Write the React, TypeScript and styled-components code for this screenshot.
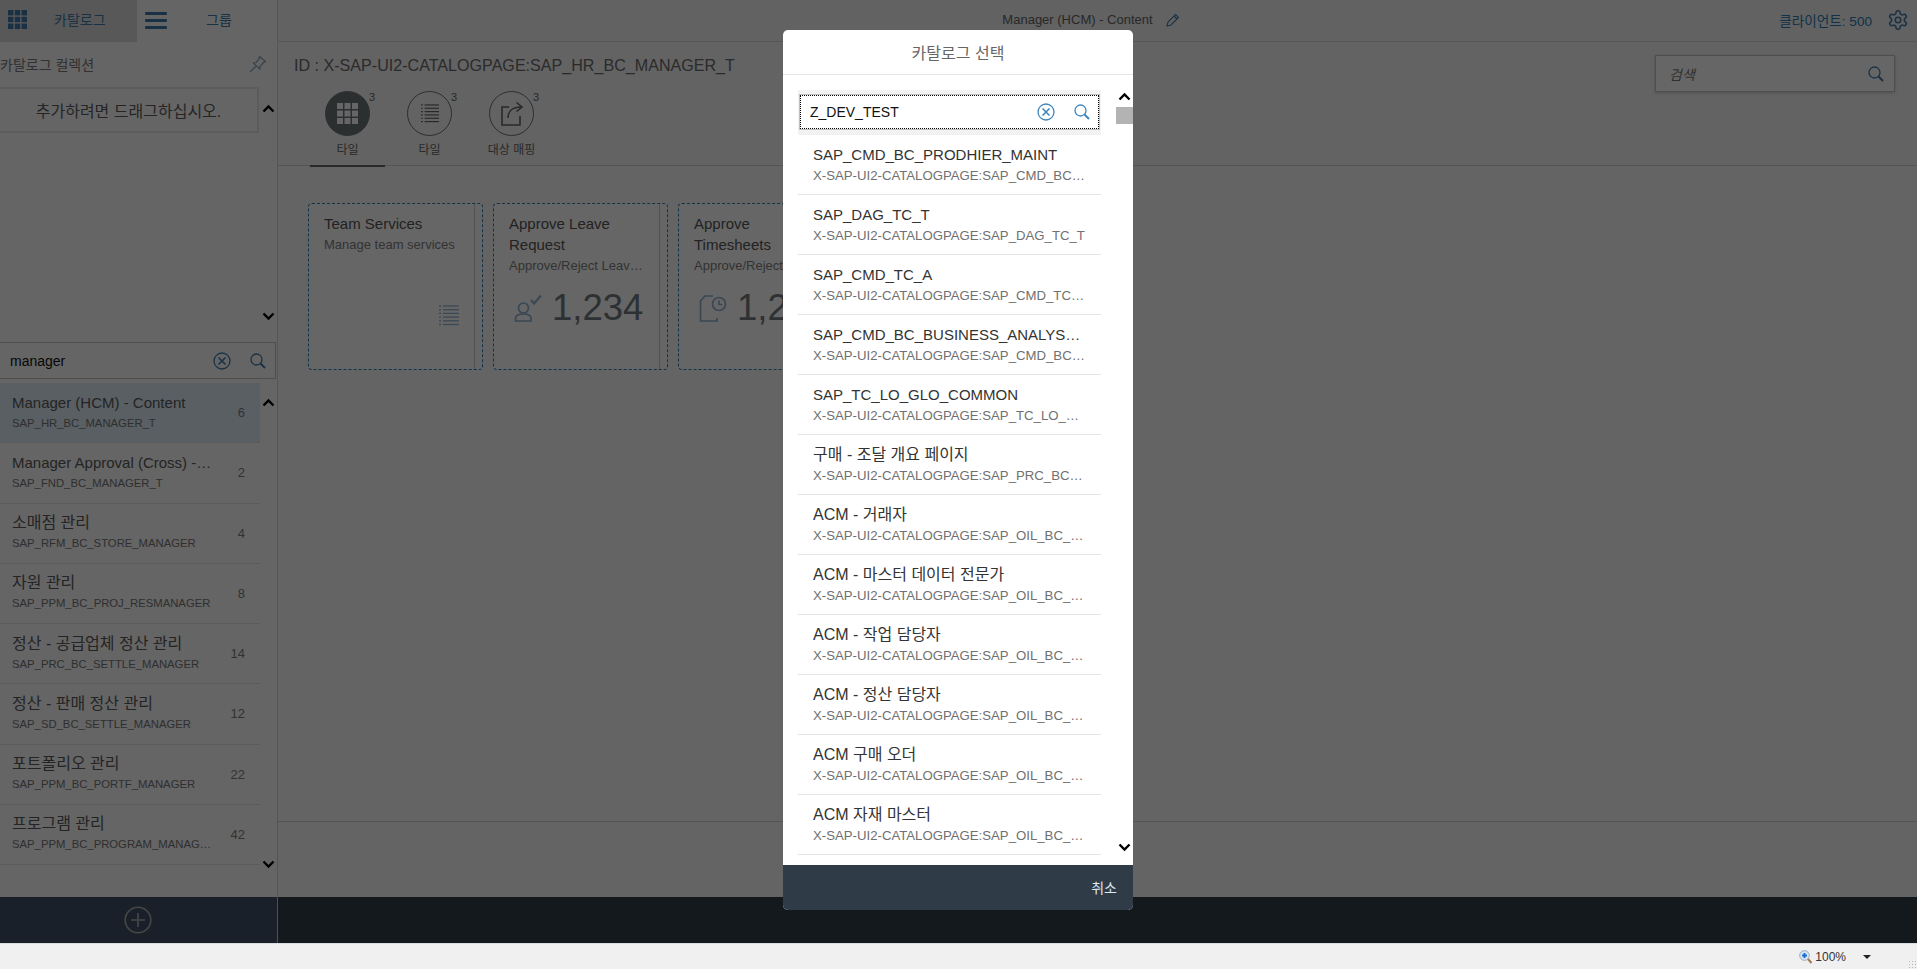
import React, { FunctionComponent } from 'react';
import styled, { createGlobalStyle } from 'styled-components';

const GlobalStyle = createGlobalStyle`
  html, body {
    margin: 0;
    padding: 0;
    overflow: hidden;
    font-family: "Liberation Sans", "Noto Sans CJK KR", sans-serif;
  }
  * {
    box-sizing: border-box;
  }
`;

const Page = styled.div`
  display: flex;
  flex-direction: column;
  height: 969px;
  width: 1917px;
`;

const Shell = styled.div`
  display: flex;
  flex-direction: column;
  height: 943px;
  position: relative;
`;

const Workspace = styled.div`
  display: flex;
  flex: 1;
  min-height: 0;
  background: #fbfbfb;
`;

const Panel = styled.aside`
  display: flex;
  flex-direction: column;
  width: 278px;
  border-right: 1px solid #d8d8d8;
  background: #fcfcfc;
`;

const PanelTabs = styled.div`
  display: flex;
  align-items: center;
  height: 42px;
  flex: none;
`;

const CatalogTab = styled.div`
  display: flex;
  align-items: center;
  width: 137px;
  height: 42px;
  padding: 0 0 4px 8px;
  background: #dcdcdc;
  color: #427cac;
  font-size: 14px;
`;

const CatalogTabLabel = styled.span`
  margin-left: 27px;
`;

const MenuButton = styled.div`
  display: flex;
  width: 38px;
  justify-content: center;
  margin-bottom: 2px;
`;

const GroupTab = styled.div`
  color: #427cac;
  font-size: 14px;
  margin: 0 0 4px 31px;
`;

const CollectionHeader = styled.div`
  display: flex;
  align-items: center;
  justify-content: space-between;
  height: 45px;
  padding: 0 10px 2px 0;
  font-size: 14px;
  color: #7a7a7a;
  flex: none;
`;

const DropZoneRow = styled.div`
  display: flex;
  height: 255px;
  flex: none;
`;

const DropZone = styled.div`
  width: 259px;
  height: 46px;
  border: 2px solid #e6e6e6;
  border-left: none;
  display: flex;
  align-items: center;
  justify-content: center;
  font-size: 16px;
  color: #5e5e5e;
`;

const ScrollRail = styled.div`
  display: flex;
  flex: 1;
  flex-direction: column;
  align-items: center;
  justify-content: space-between;
  padding: 17px 0 21px;
`;

const PanelSearch = styled.div`
  display: flex;
  align-items: center;
  flex: none;
  width: 276px;
  height: 37px;
  border: 1px solid #c4c4c4;
  border-left: none;
  background: #fdfdfd;
  padding: 0 9px 0 10px;
  font-size: 14px;
  color: #111;
`;

const SearchValue = styled.span`
  flex: 1;
  font-weight: 400;
`;

const SearchIcons = styled.div`
  display: flex;
  align-items: center;
  gap: 19px;
`;

const PanelListRow = styled.div`
  display: flex;
  flex: 1;
  min-height: 0;
  margin-top: 4px;
`;

const PanelList = styled.div`
  width: 260px;
  flex: none;
`;

const PanelRail = styled(ScrollRail)`
  padding: 15px 0 28px;
`;

const PanelItem = styled.div<{ $selected?: boolean }>`
  display: flex;
  align-items: center;
  height: 60.25px;
  padding: 0 15px 0 12px;
  border-bottom: 1px solid #e4e4e4;
  background: ${p => (p.$selected ? '#dfedf7' : 'transparent')};
`;

const PanelItemText = styled.div`
  flex: 1;
  min-width: 0;
`;

const PanelItemTitle = styled.div<{ $hangul?: boolean }>`
  font-size: ${p => (p.$hangul ? '16px' : '15px')};
  line-height: 20px;
  color: #5a5a5a;
  white-space: nowrap;
  overflow: hidden;
  text-overflow: ellipsis;
`;

const PanelItemCode = styled.div`
  font-size: 11.3px;
  line-height: 20px;
  color: #777;
  white-space: nowrap;
  overflow: hidden;
  text-overflow: ellipsis;
`;

const PanelItemCount = styled.div`
  width: 32px;
  flex: none;
  text-align: right;
  font-size: 13px;
  color: #7e7e7e;
`;

const Main = styled.main`
  display: flex;
  flex: 1;
  flex-direction: column;
  min-width: 0;
`;

const MainHeader = styled.header`
  display: grid;
  grid-template-columns: 1fr auto 1fr;
  align-items: center;
  height: 42px;
  flex: none;
  padding: 0 8px 2px 0;
  border-bottom: 1px solid #d8d8d8;
  background: #f4f4f4;
`;

const HeaderTitle = styled.div`
  display: flex;
  align-items: center;
  gap: 13px;
  font-size: 13px;
  color: #666;
  margin-right: 5px;
`;

const HeaderRight = styled.div`
  display: flex;
  align-items: center;
  justify-content: flex-end;
  gap: 15px;
  font-size: 13.6px;
  color: #2a7fb8;
`;

const ObjectHeader = styled.div`
  display: flex;
  flex-direction: column;
  height: 124px;
  flex: none;
  padding: 11px 0 0 16px;
  border-bottom: 1px solid #c9d4de;
  position: relative;
  background: #f7f7f7;
`;

const ObjectTitle = styled.h1`
  margin: 0;
  font-size: 16.1px;
  line-height: 24px;
  font-weight: 400;
  color: #6c6c6c;
`;

const TabBar = styled.div`
  display: flex;
  margin: 14px 0 0 16px;
`;

const IconTab = styled.div<{ $active?: boolean }>`
  width: 75px;
  height: 76px;
  margin-right: 7px;
  display: flex;
  flex-direction: column;
  align-items: center;
  position: relative;
  border-bottom: 2px solid ${p => (p.$active ? '#666' : 'transparent')};
`;

const IconCircle = styled.div<{ $active?: boolean }>`
  width: 45px;
  height: 45px;
  border-radius: 50%;
  display: flex;
  align-items: center;
  justify-content: center;
  border: 1px solid #6f7578;
  background: ${p => (p.$active ? '#6f7578' : 'transparent')};
`;

const TabBadge = styled.span`
  position: absolute;
  top: 0;
  left: 59px;
  font-size: 11px;
  line-height: 12px;
  color: #666;
`;

const TabLabel = styled.span`
  margin-top: 6px;
  font-size: 12px;
  line-height: 16px;
  color: #666;
`;

const ObjectSearch = styled.div`
  position: absolute;
  top: 13px;
  right: 22px;
  width: 240px;
  height: 37px;
  display: flex;
  align-items: center;
  justify-content: space-between;
  padding: 0 10px 0 13px;
  background: #fff;
  border: 1px solid #c4c4c4;
  box-shadow: 0 1px 3px rgba(0, 0, 0, 0.2);
  font-size: 14px;
  font-style: italic;
  color: #777;
`;

const TileArea = styled.section`
  display: flex;
  flex: 1;
  gap: 10px;
  padding: 37px 0 0 30px;
  overflow: hidden;
  border-bottom: 1px solid #c9d4de;
`;

const Tile = styled.article`
  display: flex;
  flex: none;
  width: 175px;
  height: 167px;
  background: #fff;
  border: 1px dashed #2a7fb8;
  border-radius: 4px;
`;

const TileBody = styled.div`
  display: flex;
  flex: 1;
  flex-direction: column;
  min-width: 0;
  padding: 9px 8px 0 15px;
  border-right: 1px solid #ccc;
`;

const TileStrip = styled.div`
  width: 7px;
  flex: none;
`;

const TileTitle = styled.div`
  padding-right: 12px;
  font-size: 15px;
  line-height: 21px;
  color: #555;
`;

const TileSub = styled.div`
  padding-right: 6px;
  font-size: 13px;
  line-height: 21px;
  color: #808080;
  white-space: nowrap;
  overflow: hidden;
  text-overflow: ellipsis;
`;

const TileKpi = styled.div`
  display: flex;
  align-items: center;
  gap: 10px;
  margin-top: 9px;
  padding-left: 5px;
`;

const TileNumber = styled.span`
  font-size: 36.5px;
  line-height: 46px;
  color: #737b80;
`;

const TileFoot = styled.div`
  display: flex;
  justify-content: flex-end;
  margin-top: auto;
  padding: 0 7px 43px 0;
`;

const LowerArea = styled.div`
  height: 75px;
  flex: none;
`;

const Footer = styled.footer`
  display: flex;
  height: 46px;
  flex: none;
  background: #323f49;
`;

const FooterLeft = styled.div`
  display: flex;
  align-items: center;
  justify-content: center;
  width: 278px;
  height: 46px;
  padding-right: 2px;
  background: #415266;
  border-right: 1px solid #c8c8c8;
`;

const StatusBar = styled.div`
  display: flex;
  align-items: center;
  justify-content: flex-end;
  height: 26px;
  padding-right: 46px;
  background: #f0f0f0;
  border-top: 1px solid #d9dde0;
  font-size: 12px;
  color: #333;
  position: relative;
`;

const StatusZoom = styled.span`
  margin: 0 17px 0 3px;
`;

const ResizeGrip = styled.div`
  position: absolute;
  right: 1px;
  bottom: 1px;
  width: 8px;
  height: 8px;
  background-image: radial-gradient(#b5b5b5 1px, transparent 1px);
  background-size: 3px 3px;
`;

const Scrim = styled.div`
  position: absolute;
  inset: 0;
  background: rgba(0, 0, 0, 0.6);
  display: flex;
  justify-content: center;
  align-items: flex-start;
  padding: 30px 1px 0 0;
`;

const Dialog = styled.div`
  width: 350px;
  height: 880px;
  display: flex;
  flex-direction: column;
  background: #fff;
  border-radius: 5px;
  overflow: hidden;
`;

const DialogHeader = styled.div`
  display: flex;
  align-items: center;
  justify-content: center;
  height: 45px;
  flex: none;
  border-bottom: 1px solid #e5e5e5;
  font-size: 16px;
  color: #666;
`;

const DialogBody = styled.div`
  display: flex;
  flex: 1;
  min-height: 0;
  padding: 15px 0 0 15px;
`;

const DialogList = styled.div`
  width: 303px;
  flex: none;
`;

const DialogRail = styled.div`
  display: flex;
  flex: 1;
  flex-direction: column;
  align-items: flex-end;
  padding-bottom: 10px;
  margin-top: -1px;
`;

const RailArrowBox = styled.div`
  width: 17px;
  display: flex;
  justify-content: center;
  height: 15px;
  align-items: center;
`;

const RailThumb = styled.div`
  width: 17px;
  height: 17px;
  margin-top: 3px;
  background: #b3b3b3;
`;

const RailSpacer = styled.div`
  flex: 1;
`;

const DialogSearchWrap = styled.div`
  height: 45px;
  padding: 4px 1px 5px;
  background: #f2f2f2;
`;

const DialogSearch = styled.div`
  display: flex;
  align-items: center;
  height: 36px;
  padding: 0 9px 0 10px;
  background: #fff;
  border: 1px solid #bfbfbf;
  outline: 1px dotted #000;
  outline-offset: -2px;
  font-size: 14px;
  color: #111;
`;

const DialogItem = styled.div`
  height: 60px;
  padding: 9px 15px 0 15px;
  border-bottom: 1px solid #e5e5e5;
`;

const DialogItemTitle = styled.div<{ $hangul?: boolean }>`
  font-size: ${p => (p.$hangul ? '16px' : '15px')};
  line-height: 21px;
  margin-bottom: 1px;
  color: #333;
  white-space: nowrap;
  overflow: hidden;
  text-overflow: ellipsis;
`;

const DialogItemCode = styled.div`
  font-size: 13.2px;
  line-height: 20px;
  color: #707070;
  white-space: nowrap;
  overflow: hidden;
  text-overflow: ellipsis;
`;

const DialogFooter = styled.div`
  display: flex;
  align-items: center;
  justify-content: flex-end;
  height: 45px;
  flex: none;
  padding: 0 16px 2px 0;
  background: #2f3c48;
  font-size: 14px;
  color: #dbe6ef;
`;

const Chevron: FunctionComponent<{ up?: boolean }> = ({ up }) => (
  <svg width="13" height="9" viewBox="0 0 13 9">
    <path d={up ? 'M1.5 7.5L6.5 2.5L11.5 7.5' : 'M1.5 1.5L6.5 6.5L11.5 1.5'} fill="none" stroke="#000" strokeWidth="2.4" />
  </svg>
);

const GridIcon: FunctionComponent<{ size: number; color: string }> = ({ size, color }) => (
  <svg width={size} height={size} viewBox="0 0 21 21" fill={color}>
    {[0, 7.5, 15].map(y => [0, 7.5, 15].map(x => <rect key={`${x}-${y}`} x={x} y={y} width="6" height="6" />))}
  </svg>
);

const ListIcon: FunctionComponent<{ color: string; width?: number; height?: number }> = ({ color, width = 20, height = 21 }) => (
  <svg width={width} height={height} viewBox="0 0 20 21" stroke={color} strokeWidth="1.3" fill="none">
    {[1, 4.7, 8.4, 12.1, 15.8, 19.5].map(y => (
      <React.Fragment key={y}>
        <path d={`M0 ${y}H2`} />
        <path d={`M4 ${y}H20`} />
      </React.Fragment>
    ))}
  </svg>
);

const ShareIcon = () => (
  <svg width="26" height="26" viewBox="0 0 26 26" fill="none" stroke="#666" strokeWidth="1.6">
    <path d="M10 6H3V24H21V15" />
    <path d="M9 17C9 10 14 6 22 6" />
    <path d="M17.5 1.5L23 6L17.5 10.5" />
  </svg>
);

const ClearIcon: FunctionComponent<{ color: string }> = ({ color }) => (
  <svg width="18" height="18" viewBox="0 0 18 18" fill="none" stroke={color} strokeWidth="1.3">
    <circle cx="9" cy="9" r="8" />
    <path d="M5.5 5.5L12.5 12.5M12.5 5.5L5.5 12.5" strokeWidth="1.6" />
  </svg>
);

const SearchIcon: FunctionComponent<{ color: string }> = ({ color }) => (
  <svg width="16" height="16" viewBox="0 0 16 16" fill="none" stroke={color} strokeWidth="1.3">
    <circle cx="6.5" cy="6.5" r="5.5" />
    <path d="M10.5 10.5L15 15" strokeWidth="2" />
  </svg>
);

const PinIcon = () => (
  <svg width="18" height="18" viewBox="0 0 18 18" fill="none" stroke="#8aa4bb" strokeWidth="1.2">
    <path d="M10.5 1.5L16.5 6.5L14.5 7.5L11 11.5L10.8 14L4.5 8L7 7.5L10 4Z" />
    <path d="M7 11L1 17" />
  </svg>
);

const MenuIcon = () => (
  <svg width="22" height="17" viewBox="0 0 22 17" fill="#427cac">
    <rect width="22" height="3" rx="1" />
    <rect y="7" width="22" height="3" rx="1" />
    <rect y="14" width="22" height="3" rx="1" />
  </svg>
);

const PencilIcon = () => (
  <svg width="14" height="14" viewBox="0 0 14 14" fill="none" stroke="#427cac" strokeWidth="1.1">
    <path d="M1 13L2 9L9.5 1.5L12.5 4.5L5 12Z" />
    <path d="M8 3L11 6" />
  </svg>
);

const GearIcon = () => (
  <svg width="22" height="22" viewBox="0 0 24 24" fill="none" stroke="#427cac" strokeWidth="1.7">
    <path d="M12.22 2h-.44a2 2 0 0 0-2 2v.18a2 2 0 0 1-1 1.73l-.43.25a2 2 0 0 1-2 0l-.15-.08a2 2 0 0 0-2.73.73l-.22.38a2 2 0 0 0 .73 2.73l.15.1a2 2 0 0 1 1 1.72v.51a2 2 0 0 1-1 1.74l-.15.09a2 2 0 0 0-.73 2.73l.22.38a2 2 0 0 0 2.73.73l.15-.08a2 2 0 0 1 2 0l.43.25a2 2 0 0 1 1 1.73V20a2 2 0 0 0 2 2h.44a2 2 0 0 0 2-2v-.18a2 2 0 0 1 1-1.73l.43-.25a2 2 0 0 1 2 0l.15.08a2 2 0 0 0 2.73-.73l.22-.39a2 2 0 0 0-.73-2.73l-.15-.08a2 2 0 0 1-1-1.74v-.5a2 2 0 0 1 1-1.74l.15-.09a2 2 0 0 0 .73-2.73l-.22-.38a2 2 0 0 0-2.73-.73l-.15.08a2 2 0 0 1-2 0l-.43-.25a2 2 0 0 1-1-1.73V4a2 2 0 0 0-2-2z" />
    <circle cx="12" cy="12" r="3" />
  </svg>
);

const ApproveIcon = () => (
  <svg width="28" height="28" viewBox="0 0 28 28" fill="none" stroke="#8fb3d1" strokeWidth="1.7">
    <circle cx="9.5" cy="14" r="5" />
    <path d="M1.5 27V24.5C1.5 21.5 4 20 9.5 20C15 20 17 21.5 17 24.5V27Z" />
    <path d="M17 6L20 9.5L27 1.5" strokeWidth="2.2" />
  </svg>
);

const TimesheetIcon = () => (
  <svg width="28" height="28" viewBox="0 0 28 28" fill="none" stroke="#8fb3d1" strokeWidth="1.7">
    <path d="M14 2H6L1.5 7V27H18V24" />
    <circle cx="20" cy="10" r="6.5" />
    <path d="M20 6.5V10.5H23.5" />
  </svg>
);

const PlusIcon = () => (
  <svg width="28" height="28" viewBox="0 0 28 28" fill="none" stroke="#b0b0b0" strokeWidth="1.6">
    <circle cx="14" cy="14" r="12.8" />
    <path d="M7 14H21M14 7V21" />
  </svg>
);

const ZoomIcon = () => (
  <svg width="13" height="14" viewBox="0 0 13 14">
    <circle cx="5.5" cy="5.5" r="4.8" fill="#d8e6f5" stroke="#9aa7b5" />
    <path d="M3 5.5H8M5.5 3V8" stroke="#1c6fd0" strokeWidth="2" />
    <path d="M9 9L12.5 13" stroke="#a07a50" strokeWidth="2" />
  </svg>
);

const CollectionList = [
  { title: 'Manager (HCM) - Content', code: 'SAP_HR_BC_MANAGER_T', count: 6 },
  { title: 'Manager Approval (Cross) - Content', code: 'SAP_FND_BC_MANAGER_T', count: 2 },
  { title: '소매점 관리', code: 'SAP_RFM_BC_STORE_MANAGER', count: 4 },
  { title: '자원 관리', code: 'SAP_PPM_BC_PROJ_RESMANAGER', count: 8 },
  { title: '정산 - 공급업체 정산 관리', code: 'SAP_PRC_BC_SETTLE_MANAGER', count: 14 },
  { title: '정산 - 판매 정산 관리', code: 'SAP_SD_BC_SETTLE_MANAGER', count: 12 },
  { title: '포트폴리오 관리', code: 'SAP_PPM_BC_PORTF_MANAGER', count: 22 },
  { title: '프로그램 관리', code: 'SAP_PPM_BC_PROGRAM_MANAGER', count: 42 },
];

const prefix = 'X-SAP-UI2-CATALOGPAGE:';

const CatalogList = [
  { title: 'SAP_CMD_BC_PRODHIER_MAINT', code: 'SAP_CMD_BC_PRODHIER_MAINT' },
  { title: 'SAP_DAG_TC_T', code: 'SAP_DAG_TC_T' },
  { title: 'SAP_CMD_TC_A', code: 'SAP_CMD_TC_A_MASTER_DATA' },
  { title: 'SAP_CMD_BC_BUSINESS_ANALYST_MAINT', code: 'SAP_CMD_BC_BUSINESS_ANALYST' },
  { title: 'SAP_TC_LO_GLO_COMMON', code: 'SAP_TC_LO_GLO_COMMON' },
  { title: '구매 - 조달 개요 페이지', code: 'SAP_PRC_BC_PURCHASER_OVP' },
  { title: 'ACM - 거래자', code: 'SAP_OIL_BC_ACM_TRADER' },
  { title: 'ACM - 마스터 데이터 전문가', code: 'SAP_OIL_BC_ACM_MASTER' },
  { title: 'ACM - 작업 담당자', code: 'SAP_OIL_BC_ACM_OPERATOR' },
  { title: 'ACM - 정산 담당자', code: 'SAP_OIL_BC_ACM_SETTLE' },
  { title: 'ACM 구매 오더', code: 'SAP_OIL_BC_ACM_PURCHASE' },
  { title: 'ACM 자재 마스터', code: 'SAP_OIL_BC_ACM_MATERIAL' },
];

const hasHangul = (text: string) => /[가-힣]/.test(text);

const App: FunctionComponent = () => (
  <Page>
    <GlobalStyle />
    <Shell>
      <Workspace>
        <Panel>
          <PanelTabs>
            <CatalogTab>
              <GridIcon size={19} color="#427cac" />
              <CatalogTabLabel>카탈로그</CatalogTabLabel>
            </CatalogTab>
            <MenuButton><MenuIcon /></MenuButton>
            <GroupTab>그룹</GroupTab>
          </PanelTabs>
          <CollectionHeader>
            <span>카탈로그 컬렉션</span>
            <PinIcon />
          </CollectionHeader>
          <DropZoneRow>
            <DropZone>추가하려면 드래그하십시오.</DropZone>
            <ScrollRail>
              <Chevron up />
              <Chevron />
            </ScrollRail>
          </DropZoneRow>
          <PanelSearch>
            <SearchValue>manager</SearchValue>
            <SearchIcons>
              <ClearIcon color="#427cac" />
              <SearchIcon color="#427cac" />
            </SearchIcons>
          </PanelSearch>
          <PanelListRow>
            <PanelList>
              {CollectionList.map((item, index) => (
                <PanelItem key={item.code} $selected={index === 0}>
                  <PanelItemText>
                    <PanelItemTitle $hangul={hasHangul(item.title)}>{item.title}</PanelItemTitle>
                    <PanelItemCode>{item.code}</PanelItemCode>
                  </PanelItemText>
                  <PanelItemCount>{item.count}</PanelItemCount>
                </PanelItem>
              ))}
            </PanelList>
            <PanelRail>
              <Chevron up />
              <Chevron />
            </PanelRail>
          </PanelListRow>
        </Panel>
        <Main>
          <MainHeader>
            <span />
            <HeaderTitle>
              Manager (HCM) - Content
              <PencilIcon />
            </HeaderTitle>
            <HeaderRight>
              클라이언트: 500
              <GearIcon />
            </HeaderRight>
          </MainHeader>
          <ObjectHeader>
            <ObjectTitle>ID : X-SAP-UI2-CATALOGPAGE:SAP_HR_BC_MANAGER_T</ObjectTitle>
            <TabBar>
              <IconTab $active>
                <IconCircle $active><GridIcon size={21} color="#fff" /></IconCircle>
                <TabBadge>3</TabBadge>
                <TabLabel>타일</TabLabel>
              </IconTab>
              <IconTab>
                <IconCircle><ListIcon color="#666" width={18} height={19} /></IconCircle>
                <TabBadge>3</TabBadge>
                <TabLabel>타일</TabLabel>
              </IconTab>
              <IconTab>
                <IconCircle><ShareIcon /></IconCircle>
                <TabBadge>3</TabBadge>
                <TabLabel>대상 매핑</TabLabel>
              </IconTab>
            </TabBar>
            <ObjectSearch>
              검색
              <SearchIcon color="#427cac" />
            </ObjectSearch>
          </ObjectHeader>
          <TileArea>
            <Tile>
              <TileBody>
                <TileTitle>Team Services</TileTitle>
                <TileSub>Manage team services</TileSub>
                <TileFoot><ListIcon color="#8fb3d1" /></TileFoot>
              </TileBody>
              <TileStrip />
            </Tile>
            <Tile>
              <TileBody>
                <TileTitle>Approve Leave Request</TileTitle>
                <TileSub>Approve/Reject Leave Requests</TileSub>
                <TileKpi>
                  <ApproveIcon />
                  <TileNumber>1,234</TileNumber>
                </TileKpi>
              </TileBody>
              <TileStrip />
            </Tile>
            <Tile>
              <TileBody>
                <TileTitle>Approve Timesheets</TileTitle>
                <TileSub>Approve/Reject Timesheets</TileSub>
                <TileKpi>
                  <TimesheetIcon />
                  <TileNumber>1,234</TileNumber>
                </TileKpi>
              </TileBody>
              <TileStrip />
            </Tile>
          </TileArea>
          <LowerArea />
        </Main>
      </Workspace>
      <Footer>
        <FooterLeft><PlusIcon /></FooterLeft>
      </Footer>
      <Scrim>
        <Dialog>
          <DialogHeader>카탈로그 선택</DialogHeader>
          <DialogBody>
            <DialogList>
              <DialogSearchWrap>
                <DialogSearch>
                  <SearchValue>Z_DEV_TEST</SearchValue>
                  <SearchIcons>
                    <ClearIcon color="#3f86bf" />
                    <SearchIcon color="#3f86bf" />
                  </SearchIcons>
                </DialogSearch>
              </DialogSearchWrap>
              {CatalogList.map(item => (
                <DialogItem key={item.title}>
                  <DialogItemTitle $hangul={hasHangul(item.title)}>{item.title}</DialogItemTitle>
                  <DialogItemCode>{prefix + item.code}</DialogItemCode>
                </DialogItem>
              ))}
            </DialogList>
            <DialogRail>
              <RailArrowBox><Chevron up /></RailArrowBox>
              <RailThumb />
              <RailSpacer />
              <RailArrowBox><Chevron /></RailArrowBox>
            </DialogRail>
          </DialogBody>
          <DialogFooter>취소</DialogFooter>
        </Dialog>
      </Scrim>
    </Shell>
    <StatusBar>
      <ZoomIcon />
      <StatusZoom>100%</StatusZoom>
      <svg width="8" height="4" viewBox="0 0 8 4"><path d="M0 0H8L4 4Z" fill="#222" /></svg>
      <ResizeGrip />
    </StatusBar>
  </Page>
);

export default App;
